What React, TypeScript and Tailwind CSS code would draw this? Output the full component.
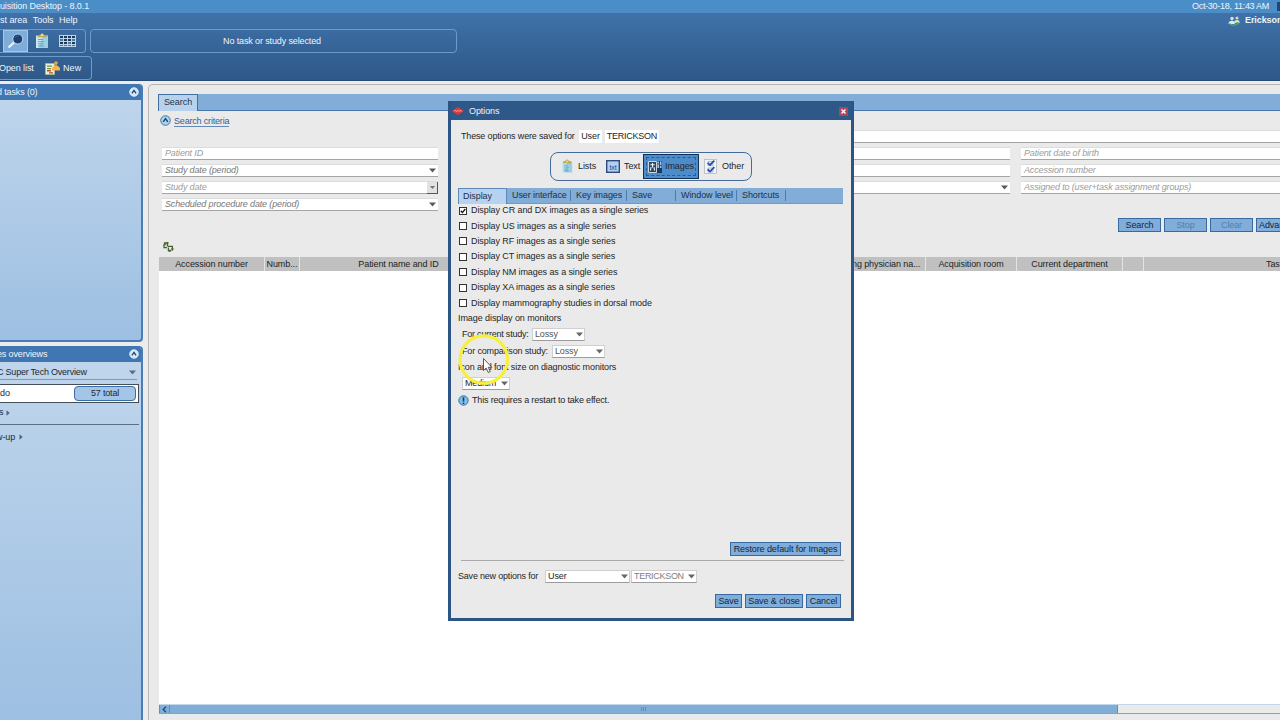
import React from 'react';
import clsx from 'clsx';

const Caret: React.FC<{ className?: string }> = ({ className }) => (
  <svg viewBox="0 0 7 5" className={clsx('w-[7px] h-[5px] shrink-0', className)}>
    <path d="M0 0.5h7L3.5 4.5z" fill="currentColor" />
  </svg>
);

const ExpandArrow = () => (
  <svg viewBox="0 0 4 6" className="w-1 h-[6px] shrink-0">
    <path d="M0.5 0.3v5.4L3.7 3z" fill="#4d647d" />
  </svg>
);

const CollapseIcon: React.FC<{ className?: string; dark?: boolean }> = ({ className, dark }) => (
  <svg viewBox="0 0 11 11" className={clsx('shrink-0', className)}>
    <circle cx="5.5" cy="5.5" r="4.8" fill={dark ? '#a9d2ee' : '#d3e9f7'} stroke={dark ? '#3a6c9d' : '#d3e9f7'} strokeWidth="0.9" />
    <path d="M3.2 6.9L5.5 3.6L7.8 6.9" fill="none" stroke="#1f4468" strokeWidth="1.4" />
  </svg>
);

const ClipboardIcon: React.FC<{ className?: string }> = ({ className }) => (
  <svg viewBox="0 0 14 16" className={clsx('shrink-0', className)}>
    <path d="M1 2.5h12v12.5H1z" fill="#c9e8f3" />
    <path d="M8 2.5h5v12.5H4z" fill="#79bad5" opacity="0.55" />
    <path d="M3 3.8V2.2h2.3C5.3-.2 9-.2 9 2.2h2.3v1.6z" fill="#e8c65a" stroke="#94833d" strokeWidth="0.6" />
    <circle cx="7.1" cy="1.9" r="0.7" fill="#fff" />
    <path d="M3 6.5h5M3 8.7h6M3 10.9h5M3 13h6" stroke="#4f91ae" strokeWidth="0.8" />
  </svg>
);

const SearchIcon = () => (
  <svg viewBox="0 0 18 16" className="w-[18px] h-4">
    <path d="M1.5 14.5L8 8.6" stroke="#e6f3ff" strokeWidth="2.2" />
    <circle cx="10.8" cy="6" r="5" fill="#1c406f" stroke="#c5ddf2" strokeWidth="0.9" />
    <path d="M8.4 4.9C9 3.4 10.2 2.8 11.8 3" fill="none" stroke="#4774a5" strokeWidth="0.8" />
  </svg>
);

const TableIcon = () => (
  <svg viewBox="0 0 17 12" className="w-[17px] h-3">
    <path d="M0 0h17v12H0z" fill="#bbd6ed" />
    <path d="M1 1h3v2H1zM5 1h3v2H5zM9 1h3v2H9zM13 1h3v2h-3zM5 4h3v2H5zM9 4h3v2H9zM1 7h3v2H1zM5 7h3v2H5zM13 7h3v2h-3z" fill="#1e3956" />
    <path d="M1 4h3v2H1zM13 4h3v2h-3zM9 7h3v2H9zM1 10h3v1H1zM5 10h3v1H5zM9 10h3v1H9zM13 10h3v1h-3z" fill="#4b769e" />
  </svg>
);

const NewIcon = () => (
  <svg viewBox="0 0 15 14" className="w-[15px] h-[14px]">
    <path d="M0.5 2.5h9v11h-9z" fill="#e7f1d5" stroke="#a8c07e" strokeWidth="0.6" />
    <path d="M2 4.5h5v1.3H2zM2 7h4v1.2H2z" fill="#6b9742" />
    <path d="M2 9h4v1.6H2zM4 11.2h4v1.3H4z" fill="#c34a35" />
    <circle cx="11" cy="2" r="1.7" fill="#f0a63c" />
    <path d="M7 9.5V7L9.3 4.8h3.5L15 7v2.5z" fill="#f6b44c" />
    <path d="M11 3.5v2" stroke="#f6b44c" strokeWidth="1.2" />
  </svg>
);

const UsersIcon = () => (
  <svg viewBox="0 0 12 10" className="w-3 h-2.5 shrink-0">
    <circle cx="4" cy="2.5" r="1.7" fill="#e7dfcf" />
    <circle cx="9" cy="2" r="1.6" fill="#d9d6bd" />
    <path d="M0.5 8C.6 5.8 2 4.8 4 4.8S6.4 5.6 6.8 8z" fill="#ddecf0" />
    <path d="M6 7c.2-2.2 1-3 3-3s2.5 1.2 2.7 3z" fill="#d4e8de" />
    <path d="M1.5 7.5C4 10 7.5 9.4 9.7 7.2" fill="none" stroke="#5eab6c" strokeWidth="1.3" />
    <path d="M7.6 6h3v3z" fill="#5eab6c" />
  </svg>
);

const RefreshIcon = () => (
  <svg viewBox="0 0 11 10" className="w-[11px] h-2.5">
    <path d="M4.4 4.6V1H1.6v1.2M1 2.9v2.8h3" fill="none" stroke="#46632b" strokeWidth="1.3" />
    <path d="M0 3.2L1.6.8L3.2 3.2zM3.2 0h2.2v2.4z" fill="#46632b" />
    <path d="M5 4.4h4.4v3M5.4 5.6v3h3" fill="none" stroke="#46632b" strokeWidth="1.3" />
    <path d="M7.8 6.4h3.2L9.4 8.9zM7.4 7v3L5.4 9.6z" fill="#46632b" />
  </svg>
);

const TxtIcon = () => (
  <svg viewBox="0 0 14 13" className="w-[14px] h-[13px] shrink-0">
    <rect x="0.7" y="0.7" width="12.6" height="11.6" fill="#b5d0ee" stroke="#2d4b80" strokeWidth="1.4" />
    <text x="7" y="9.6" textAnchor="middle" fontSize="7" fill="#27467b" fontFamily="Liberation Sans, sans-serif">txt</text>
  </svg>
);

const ImagesIcon = () => (
  <svg viewBox="0 0 14 12" className="w-[14px] h-3 shrink-0">
    <path d="M0 0h14v12H0z" fill="#1d3a58" />
    <path d="M0.5 0.5h8v11h-8z" fill="#2c4a68" stroke="#dbe7f1" strokeWidth="0.9" />
    <path d="M4.5 2v4.5M2.3 3.8h4.4M3 6.2L2.4 9.5M6 6.2L6.6 9.5" fill="none" stroke="#eef4f9" strokeWidth="1.1" />
    <path d="M9.4 0.5h1.6v6.5H9.4zM11.9 0.5h1.6v6.5h-1.6z" fill="#a9c3da" />
    <path d="M9.4 3h1.6M11.9 4.5h1.6" stroke="#17324f" strokeWidth="0.8" />
  </svg>
);

const OtherIcon = () => (
  <svg viewBox="0 0 13 15" className="w-[13px] h-[15px] shrink-0">
    <rect x="0.4" y="0.4" width="12.2" height="14.2" fill="#f2f4f8" stroke="#aab0ba" strokeWidth="0.7" />
    <path d="M4 2.5h5v4H4zM4 9h5v4H4z" fill="#e5e9f2" stroke="#8c9ab3" strokeWidth="0.6" />
    <path d="M3.6 3.8L6 6L10.3 1.6M3.6 10.4L6 12.6L10.3 8.2" fill="none" stroke="#2550a8" strokeWidth="1.8" />
  </svg>
);

interface FieldProps {
  label?: string;
  caret?: boolean;
  button?: boolean;
  dark?: boolean;
  className?: string;
}

const Field: React.FC<FieldProps> = ({ label, caret, button, dark, className }) => (
  <div className={clsx('h-[13px] bg-white border-t border-t-[#dcdcdc] border-b border-b-[#a5a5a5] flex items-center justify-between pl-[3px] italic tracking-[-0.15px]', dark ? 'text-[#777]' : 'text-[#9c9c9c]', className)}>
    <span>{label}</span>
    {caret && <Caret className="text-[#5a5a5a] mr-[2px]" />}
    {button && (
      <span className="w-[11px] h-[12px] bg-[#e2e2e2] border-r border-b border-[#555] flex items-center justify-center">
        <Caret className="text-[#777] scale-75" />
      </span>
    )}
  </div>
);

const Select: React.FC<{ value: string; className?: string }> = ({ value, className }) => (
  <div className={clsx('h-[13px] bg-white border border-[#cfcfcf] border-b-[#9d9d9d] flex items-center justify-between pl-[2px] pr-px shrink-0', className)}>
    <span>{value}</span>
    <Caret className="text-[#666]" />
  </div>
);

const Button: React.FC<{ children: React.ReactNode; disabled?: boolean; className?: string }> = ({ children, disabled, className }) => (
  <button className={clsx('h-[14px] bg-[#80add9] border border-[#38699f] flex items-center justify-center whitespace-nowrap shrink-0', disabled ? 'text-[#527fae]' : 'text-[#14263c]', className)}>
    {children}
  </button>
);

const Header = () => (
  <header className="h-[81px] shrink-0 flex flex-col bg-linear-to-b from-[#4377b0] to-[#2e5888] text-[#eef5fc] border-b border-[#264b76]">
    <div className="h-[13px] shrink-0 bg-[#4a8dc7] flex items-center justify-between">
      <span className="-ml-[5px] tracking-[-0.1px]">quisition Desktop - 8.0.1</span>
      <div className="flex items-center gap-[8px]">
        <span className="tracking-[-0.28px]">Oct-30-18, 11:43 AM</span>
        <span className="w-[3px] h-[9px] bg-[#1f4775]" />
      </div>
    </div>
    <div className="h-[15px] shrink-0 flex items-center justify-between">
      <div className="flex items-center gap-[5.5px] tracking-[-0.04px]">
        <span>st area</span>
        <span>Tools</span>
        <span>Help</span>
      </div>
      <div className="flex items-center gap-[5px] w-[52px] shrink-0">
        <UsersIcon />
        <span className="font-bold">Erickson</span>
      </div>
    </div>
    <div className="flex gap-[4px] mt-px h-[24px] shrink-0">
      <div className="w-[86px] border border-l-0 border-[#6c9bcb] rounded-r-[4px] flex items-center">
        <div className="w-[3px]" />
        <div className="w-[25px] h-[22px] bg-[#7eadda] border border-[#a3c8ea] flex items-center justify-center">
          <SearchIcon />
        </div>
        <ClipboardIcon className="w-[14px] h-4 ml-[7px]" />
        <div className="ml-[10px]"><TableIcon /></div>
      </div>
      <div className="w-[367px] border border-[#6c9bcb] rounded-[4px] flex items-center justify-center">
        <span className="-ml-[3px] tracking-[-0.13px]">No task or study selected</span>
      </div>
    </div>
    <div className="mt-[3px] w-[92px] h-[24px] shrink-0 border border-l-0 border-[#6c9bcb] rounded-r-[4px] flex items-center">
      <span className="-ml-px w-[46px]">Open list</span>
      <NewIcon />
      <span className="ml-[3px] tracking-[0.1px]">New</span>
    </div>
  </header>
);

const PanelTitle: React.FC<{ children: string }> = ({ children }) => (
  <div className="h-[16px] shrink-0 bg-[#4076b1] text-[#eef5fc] flex items-center justify-between pr-[2px]">
    <span className="-ml-[3px] tracking-[-0.14px]">{children}</span>
    <CollapseIcon className="w-[10px] h-[10px]" />
  </div>
);

const Sidebar = () => (
  <aside className="w-[143px] shrink-0 flex flex-col gap-[4px] pt-[3px]">
    <section className="h-[258px] shrink-0 border-r-2 border-b-2 border-[#4a7db6] rounded-r-[4px] overflow-hidden bg-linear-to-b from-[#c0d6ec] to-[#9dbfe2]">
      <PanelTitle>{'d tasks (0)'}</PanelTitle>
    </section>
    <section className="h-[380px] shrink-0 border-r-2 border-b-2 border-[#4a7db6] rounded-r-[4px] overflow-hidden bg-linear-to-b from-[#c0d6ec] to-[#9dbfe2] flex flex-col text-[#1c2836]">
      <PanelTitle>es overviews</PanelTitle>
      <div className="mr-[4px] mt-[3px] h-[15px] shrink-0 border-b border-[#809bb8] flex items-center justify-between">
        <span className="-ml-[3px] pt-px tracking-[-0.22px]">C Super Tech Overview</span>
        <Caret className="text-[#586f87] mr-px" />
      </div>
      <div className="mt-[4px] mr-[2px] h-[19px] shrink-0 bg-white border border-l-0 border-[#454f5a] flex items-center justify-between pr-[2px]">
        <span>do</span>
        <span className="w-[62px] h-[15px] rounded-[4px] border border-[#3a6da5] bg-[#a5c5e6] flex items-center justify-center tracking-[-0.16px]">57 total</span>
      </div>
      <div className="h-[19px] shrink-0 flex items-center gap-[3px]">
        <span className="-ml-px">s</span>
        <ExpandArrow />
      </div>
      <div className="mt-[2px] mr-[2px] border-t border-[#5b6f85] h-[25px] shrink-0 flex items-center gap-[4px]">
        <span className="-ml-[4px]">w-up</span>
        <ExpandArrow />
      </div>
    </section>
  </aside>
);

const columns = [
  { title: 'Accession number', className: 'w-[106px]' },
  { title: 'Numb...', className: 'w-[35px]' },
  { title: 'Patient name and ID', className: 'w-[198px]' },
  { title: '', className: 'w-[320px]' },
  { title: 'Referring physician na...', className: 'w-[108px] pl-[3px]' },
  { title: 'Acquisition room', className: 'w-[91px]' },
  { title: 'Current department', className: 'w-[106px]' },
  { title: '', className: 'w-[21px]' },
];

const Main = () => (
  <main className="flex-1 min-w-0 ml-[5px] mt-[3px] border-l border-t border-[#b7b7b7] rounded-tl-[5px] bg-[#eaeaea] pl-[9px] pt-[9px] flex flex-col">
    <div className="h-[17px] shrink-0 bg-[#81add8] border-b border-[#4777ab] flex">
      <div className="w-[40px] h-[17px] bg-[#b8d2ed] border border-b-0 border-[#44709f] text-[#22364e] flex items-center justify-center tracking-[-0.06px] pb-px">Search</div>
    </div>
    <div className="h-[19px] shrink-0 flex items-center gap-[3px] pl-[2px]">
      <CollapseIcon dark className="w-[11px] h-[11px]" />
      <span className="text-[#315f98] border-b border-[#6489b5] leading-[10px] tracking-[-0.18px] mt-px">Search criteria</span>
    </div>
    <div className="pl-[4px] grid grid-cols-[276px_561px_1fr] gap-x-[11px] gap-y-[4px] shrink-0">
      <div />
      <Field className="col-span-2" />
      <Field label="Patient ID" />
      <Field />
      <Field label="Patient date of birth" />
      <Field label="Study date (period)" caret dark />
      <Field />
      <Field label="Accession number" />
      <Field label="Study date" button />
      <Field caret />
      <Field label="Assigned to (user+task assignment groups)" />
      <Field label="Scheduled procedure date (period)" caret dark />
    </div>
    <div className="mt-[7px] ml-[960px] flex gap-[3px] shrink-0">
      <Button className="w-[43px]">Search</Button>
      <Button disabled className="w-[43px]">Stop</Button>
      <Button disabled className="w-[43px]">Clear</Button>
      <Button className="w-[60px] justify-start pl-[2px]">Advanced</Button>
    </div>
    <div className="mt-[10px] pl-[5px] h-[15px] shrink-0">
      <RefreshIcon />
    </div>
    <div className="ml-px h-[14px] shrink-0 bg-[#c0c0c0] flex text-[#1d1d1d]">
      {columns.map((column, index) => (
        <div key={index} className={clsx('h-full shrink-0 border-r border-[#e4e4e4] flex items-center justify-center whitespace-nowrap overflow-hidden', column.className)}>
          {column.title}
        </div>
      ))}
      <span className="pl-[122px] self-center">Tas</span>
    </div>
    <div className="ml-px flex-1 bg-white" />
    <div className="ml-px h-[10px] shrink-0 flex border-t border-b border-t-[#c3d7ea] border-b-[#7ba5cc] bg-[#eaeaea]">
      <div className="w-[11px] bg-[#80aed8] border-x border-[#5d8fbe] flex items-center justify-center">
        <svg viewBox="0 0 5 7" className="w-[5px] h-[7px]"><path d="M4 0.7L1.2 3.5L4 6.3" fill="none" stroke="#214d7b" strokeWidth="1.4" /></svg>
      </div>
      <div className="w-[948px] bg-[#80aed8] border-r border-[#5d8fbe] flex items-center justify-center gap-px">
        <i className="w-px h-[4px] bg-[#5d8fbe]" />
        <i className="w-px h-[4px] bg-[#5d8fbe]" />
        <i className="w-px h-[4px] bg-[#5d8fbe]" />
      </div>
    </div>
    <div className="h-[6px] shrink-0" />
  </main>
);

const tabs = [
  { label: 'User interface', className: 'w-[64px]' },
  { label: 'Key images', className: 'w-[56px]' },
  { label: 'Save', className: 'w-[49px]' },
  { label: 'Window level', className: 'w-[61px]' },
  { label: 'Shortcuts', className: 'w-[49px]' },
];

const seriesOptions = [
  { label: 'Display CR and DX images as a single series', checked: true },
  { label: 'Display US images as a single series', checked: false },
  { label: 'Display RF images as a single series', checked: false },
  { label: 'Display CT images as a single series', checked: false },
  { label: 'Display NM images as a single series', checked: false },
  { label: 'Display XA images as a single series', checked: false },
  { label: 'Display mammography studies in dorsal mode', checked: false },
];

const OptionsDialog = () => (
  <div className="absolute left-[448px] top-[101px] w-[406px] h-[520px] bg-[#eaeaea] border-[3px] border-t-0 border-[#2c5586] flex flex-col text-[#262626]">
    <div className="h-[19px] shrink-0 bg-[#2e5888] text-[#f0f5fa] flex items-center pl-px pr-[3px]">
      <svg viewBox="0 0 12 8" className="w-3 h-2">
        <path d="M0 4L2.5 2.2L6 0l3.5 2.2L12 4L9.5 5.8L6 8L2.5 5.8z" fill="#dc3a38" />
        <path d="M2 4.3l1.5-1 1 1.2L6 3.2l1 1.3 1.2-1.1 1.6.9" fill="none" stroke="#f6c9c4" strokeWidth="0.7" />
      </svg>
      <span className="ml-[5px] flex-1 pt-[2px] tracking-[-0.08px]">Options</span>
      <span className="w-[9px] h-[9px] mt-px bg-[#b04458] rounded-[1px] flex items-center justify-center">
        <svg viewBox="0 0 5 5" className="w-[5px] h-[5px]"><path d="M0.5 0.5l4 4M4.5 0.5l-4 4" stroke="#fff" strokeWidth="1.4" /></svg>
      </span>
    </div>

    <div className="mt-[9px] pl-[10px] h-[14px] shrink-0 flex items-center">
      <span className="w-[118px] tracking-[-0.16px]">These options were saved for</span>
      <span className="h-[13px] w-[23px] bg-white flex items-center justify-center">User</span>
      <span className="ml-[3px] h-[13px] w-[54px] bg-white flex items-center justify-center tracking-[-0.25px]">TERICKSON</span>
    </div>

    <div className="mt-[9px] ml-[99px] w-[202px] h-[29px] shrink-0 border border-[#456b9c] rounded-[8px] flex items-center">
      <ClipboardIcon className="w-3 h-[15px] ml-[10px]" />
      <span className="ml-[5px] w-[28px]">Lists</span>
      <TxtIcon />
      <span className="ml-[4px] w-[19px]">Text</span>
      <div className="w-[56px] h-[25px] bg-[#4c8ccb] border border-[#12304f] p-[2px] shrink-0">
        <div className="h-full border border-dashed border-[#2c5b8c] flex items-center gap-[3px] pl-px whitespace-nowrap">
          <ImagesIcon />
          <span>Images</span>
        </div>
      </div>
      <span className="ml-[5px]"><OtherIcon /></span>
      <span className="ml-[5px]">Other</span>
    </div>

    <div className="mt-[7px] ml-[7px] mr-[8px] h-[16px] shrink-0 bg-[#81add8] border-b border-[#6d9aca] flex items-center text-[#1d3048]">
      <div className="w-[49px] h-[16px] bg-[#b5d2f0] border-l border-t border-r border-[#5d88b8] pl-[4px] flex items-center">Display</div>
      {tabs.map((tab) => (
        <div key={tab.label} className={clsx('h-[11px] shrink-0 border-r border-[#4d7bad] pl-[5px] flex items-center whitespace-nowrap', tab.className)}>{tab.label}</div>
      ))}
    </div>

    <div className="pl-[8px] shrink-0 -mt-px">
      {seriesOptions.map((option) => (
        <label key={option.label} className="h-[15.4px] flex items-center gap-[4px]">
          <span className="w-2 h-2 bg-white border border-[#333] flex items-center justify-center shrink-0">
            {option.checked && (
              <svg viewBox="0 0 6 6" className="w-[6px] h-[6px]"><path d="M0.8 2.8L2.4 4.6L5.3 1" fill="none" stroke="#111" strokeWidth="1.3" /></svg>
            )}
          </span>
          <span>{option.label}</span>
        </label>
      ))}
    </div>

    <div className="pl-[7px] shrink-0 flex flex-col tracking-[-0.15px]">
      <div className="h-[15px] flex items-center tracking-[-0.08px]">Image display on monitors</div>
      <div className="h-[17px] pl-[4px] flex items-center">
        <span className="w-[70px] tracking-[-0.22px]">For current study:</span>
        <Select value="Lossy" className="w-[53px] text-[#555]" />
      </div>
      <div className="h-[17px] pl-[4px] flex items-center">
        <span className="w-[90px]">For comparison study:</span>
        <Select value="Lossy" className="w-[53px] text-[#555]" />
      </div>
      <div className="h-[16px] flex items-center tracking-[-0.12px]">Icon and font size on diagnostic monitors</div>
      <div className="h-[16px] pl-[4px] flex items-center">
        <Select value="Medium" className="w-[48px]" />
      </div>
      <div className="h-[17px] flex items-center gap-[3px]">
        <svg viewBox="0 0 11 11" className="w-[11px] h-[11px]">
          <circle cx="5.5" cy="5.5" r="4.7" fill="#7fc0ea" stroke="#3d6f9f" strokeWidth="1" />
          <path d="M5.5 2.2v4.2M5.5 7.5v1.4" stroke="#173c66" strokeWidth="1.6" />
        </svg>
        <span className="tracking-[-0.17px]">This requires a restart to take effect.</span>
      </div>
    </div>

    <div className="flex-1" />
    <div className="shrink-0 flex flex-col pl-[7px] pr-[10px]">
      <Button className="w-[111px] self-end">Restore default for Images</Button>
      <div className="mt-[4px] ml-[3px] -mr-[3px] border-t border-[#a9a9a9]" />
      <div className="mt-[8px] h-[14px] flex items-center">
        <span className="w-[87px] tracking-[-0.2px]">Save new options for</span>
        <Select value="User" className="w-[85px]" />
        <Select value="TERICKSON" className="w-[66px] ml-px text-[#808080] tracking-[-0.3px]" />
      </div>
      <div className="mt-[11px] mb-[10px] flex justify-end gap-[3px]">
        <Button className="w-[27px]">Save</Button>
        <Button className="w-[58px]">Save &amp; close</Button>
        <Button className="w-[35px]">Cancel</Button>
      </div>
    </div>
  </div>
);

const Pointer = () => (
  <div className="absolute left-[457px] top-[333px] w-[54px] h-[54px] pointer-events-none">
    <svg viewBox="0 0 54 54" className="w-full h-full">
      <circle cx="26.8" cy="26.5" r="23.7" fill="none" stroke="#f6f03a" strokeWidth="3.2" />
      <path d="M26.5 25.5v12l2.7-2.4 2.1 4.4 2-.9-2.1-4.3h3.6z" fill="#fff" stroke="#333" strokeWidth="0.8" />
    </svg>
  </div>
);

const App = () => (
  <div className="relative w-[1280px] h-[720px] overflow-hidden bg-[#ececec] flex flex-col text-[9px] leading-[11px] tracking-[-0.09px] whitespace-nowrap font-['Liberation_Sans',Arial,sans-serif]">
    <Header />
    <div className="flex-1 min-h-0 flex">
      <Sidebar />
      <Main />
    </div>
    <OptionsDialog />
    <Pointer />
  </div>
);

export default App;
